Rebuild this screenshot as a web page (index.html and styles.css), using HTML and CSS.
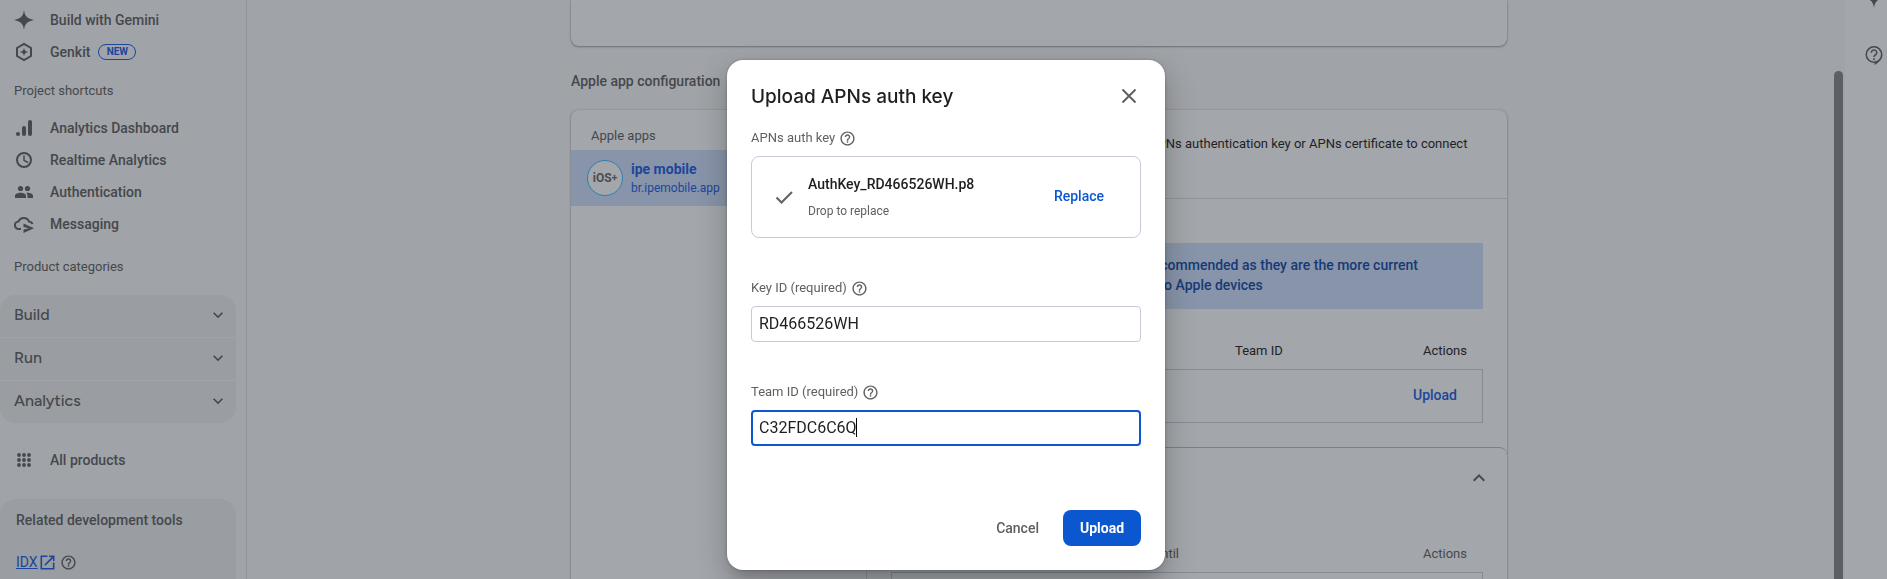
FILE: index.html
```html
<!DOCTYPE html>
<html lang="en">
<head>
<meta charset="utf-8">
<title>Cloud Messaging settings</title>
<link rel="stylesheet" href="styles.css">
</head>
<body>
<svg class="defs" aria-hidden="true">
  <symbol id="help" viewBox="0 0 24 24"><path d="M11 18h2v-2h-2v2zm1-16C6.48 2 2 6.48 2 12s4.48 10 10 10 10-4.48 10-10S17.52 2 12 2zm0 18c-4.41 0-8-3.59-8-8s3.59-8 8-8 8 3.59 8 8-3.59 8-8 8zm0-14c-2.21 0-4 1.79-4 4h2c0-1.1.9-2 2-2s2 .9 2 2c0 2-3 1.75-3 5h2c0-2.25 3-2.5 3-5 0-2.21-1.79-4-4-4z"/></symbol>
  <symbol id="spark" viewBox="0 0 20 20"><path d="M10 0c.7 5 2 8.600 10 10-8 1.400-9.300 5-10 10-.7-5-2-8.600-10-10 8-1.400 9.300-5 10-10z"/></symbol>
  <symbol id="down" viewBox="0 0 24 24"><path d="M7.410 8.590 12 13.170l4.590-4.580L18 10l-6 6-6-6z"/></symbol>
</svg>
<div class="app">
  <nav class="sidebar" aria-label="Project">
    <div class="links">
      <a class="link" href="#gemini"><svg class="i20"><use href="#spark"/></svg>Build with Gemini</a>
      <a class="link" href="#genkit"><svg class="i20" viewBox="0 0 20 20"><path d="M10 1.900 17 6v8l-7 4.100L3 14V6z" fill="none" stroke="currentColor" stroke-width="2"/><path d="M10 5.500c.4 3 1.500 4.100 4.500 4.500-3 .4-4.100 1.500-4.500 4.500-.4-3-1.500-4.100-4.500-4.500 3-.4 4.100-1.500 4.500-4.500z"/></svg>Genkit<span class="badge">NEW</span></a>
    </div>
    <h3 class="group-title">Project shortcuts</h3>
    <div class="links">
      <a class="link" href="#dashboard"><svg class="i20" viewBox="0 0 20 20"><circle cx="4" cy="16" r="2"/><rect x="8" y="8" width="4" height="10" rx="2"/><rect x="14" y="2" width="4" height="16" rx="2"/></svg>Analytics Dashboard</a>
      <a class="link" href="#realtime"><svg class="i20" viewBox="0 0 20 20"><circle cx="10" cy="10" r="7" fill="none" stroke="currentColor" stroke-width="2"/><path d="M10 5.500V10.300l4 2.200" fill="none" stroke="currentColor" stroke-width="1.500"/></svg>Realtime Analytics</a>
      <a class="link" href="#auth"><svg class="i20" viewBox="0 0 20 20"><circle cx="6.500" cy="6.500" r="2.600"/><circle cx="13.500" cy="6.500" r="2.600"/><path d="M1 16v-2.200c0-2 3-3 5.500-3s5.500 1 5.500 3V16zM13.500 16v-2.500c0-1-.5-1.900-1.200-2.600 2.700-.3 6.700.6 6.700 2.900V16z"/></svg>Authentication</a>
      <a class="link" href="#messaging"><svg class="i20" viewBox="0 0 20 20"><path d="M7 15H4.800A3.800 3.800 0 0 1 4.600 7.400 5.600 5.600 0 0 1 15 7.500c1.600.2 2.900 1 3.600 2.500" fill="none" stroke="currentColor" stroke-width="2"/><path d="M9.500 9.500 20 14.200 9.500 19v-3.600l5.500-1.200-5.500-1.200z"/></svg>Messaging</a>
    </div>
    <h3 class="group-title second">Product categories</h3>
    <div class="categories">
      <button class="category" type="button">Build<svg class="i20"><use href="#down"/></svg></button>
      <button class="category" type="button">Run<svg class="i20"><use href="#down"/></svg></button>
      <button class="category" type="button">Analytics<svg class="i20"><use href="#down"/></svg></button>
    </div>
    <a class="link all" href="#all"><svg class="i20" viewBox="0 0 20 20"><g><circle cx="5" cy="5" r="1.900"/><circle cx="10" cy="5" r="1.900"/><circle cx="15" cy="5" r="1.900"/><circle cx="5" cy="10" r="1.900"/><circle cx="10" cy="10" r="1.900"/><circle cx="15" cy="10" r="1.900"/><circle cx="5" cy="15" r="1.900"/><circle cx="10" cy="15" r="1.900"/><circle cx="15" cy="15" r="1.900"/></g></svg>All products</a>
    <section class="related">
      <h3 class="related-title">Related development tools</h3>
      <div class="related-row">
        <a class="idx" href="#idx">IDX</a><svg class="i16 open" viewBox="1 1 22 22"><path d="M19 19H5V5h7V3H3v18h18v-9h-2v7zM14 3v2h3.590l-9.830 9.830 1.410 1.410L19 6.410V10h2V3h-7z"/></svg><svg class="i16"><use href="#help"/></svg>
      </div>
    </section>
  </nav>

  <main class="main">
    <div class="column">
      <section class="card previous"></section>
      <h2 class="section-title">Apple app configuration</h2>
      <section class="card config">
        <div class="apps">
          <div class="apps-title">Apple apps</div>
          <a class="app-row" href="#app">
            <span class="platform">iOS<span class="plus">+</span></span>
            <span class="app-text"><span class="app-name">ipe mobile</span><span class="app-id">br.ipemobile.app</span></span>
          </a>
        </div>
        <div class="details">
          <p class="intro">Firebase Cloud Messaging can use either an APNs authentication key or APNs certificate to connect with APNs</p>
          <div class="panel">
            <div class="notice">Configuration with auth keys is recommended as they are the more current method for sending notifications to Apple devices</div>
            <table class="keys">
              <thead><tr><td></td><th>Team ID</th><th class="end">Actions</th></tr></thead>
              <tbody><tr><td></td><td></td><td class="end"><button class="text-button" type="button">Upload</button></td></tr></tbody>
            </table>
          </div>
          <div class="panel certificates">
            <button class="collapse" type="button" aria-label="Collapse"><svg class="i24 flip"><use href="#down"/></svg></button>
            <table class="keys muted">
              <thead><tr><th class="until">Valid until</th><td></td><th class="end">Actions</th></tr></thead>
              <tbody><tr><td></td><td></td><td></td></tr></tbody>
            </table>
          </div>
        </div>
      </section>
    </div>
  </main>
  <div class="scrollbar"><div class="thumb"></div></div>
  <aside class="rail">
    <button class="rail-button" type="button" aria-label="Gemini"><svg class="i20"><use href="#spark"/></svg></button>
    <button class="rail-button" type="button" aria-label="Support"><svg class="i20" viewBox="0 0 20 20"><path d="M10.500 17.200V20c4.500-2.300 8-6 8-10.500a8.500 8.500 0 1 0-8.500 8.500z M10 2.600a7 7 0 1 1 0 14 7 7 0 0 1 0-14z" fill-rule="evenodd"/><path d="M7.300 7.700a2.700 2.700 0 1 1 4.300 2.100c-1 .8-1.600 1.200-1.600 2.300" fill="none" stroke="currentColor" stroke-width="1.500"/><circle cx="10" cy="14.200" r="1"/></svg></button>
  </aside>
</div>

<div class="overlay">
  <form class="dialog" role="dialog" aria-modal="true" aria-labelledby="dialog-title">
    <header class="dialog-head">
      <h1 class="dialog-title" id="dialog-title">Upload APNs auth key</h1>
      <button class="close" type="button" aria-label="Close"><svg class="i24" viewBox="0 0 24 24"><path d="m5.500 5.500 13 13m0-13-13 13" stroke="currentColor" stroke-width="2"/></svg></button>
    </header>
    <div class="label">APNs auth key<svg class="i16"><use href="#help"/></svg></div>
    <div class="file">
      <svg class="i24" viewBox="0 0 24 24"><path d="m4.500 12.500 5 5 10.500-10.500" fill="none" stroke="currentColor" stroke-width="2"/></svg>
      <div class="file-text"><span class="file-name">AuthKey_RD466526WH.p8</span><span class="file-hint">Drop to replace</span></div>
      <button class="text-button replace" type="button">Replace</button>
    </div>
    <div class="field">
      <label class="label" for="key-id">Key ID (required)<svg class="i16"><use href="#help"/></svg></label>
      <input class="input" id="key-id" type="text" value="RD466526WH">
    </div>
    <div class="field">
      <label class="label" for="team-id">Team ID (required)<svg class="i16"><use href="#help"/></svg></label>
      <div class="input-wrap"><input class="input active" id="team-id" type="text" value="C32FDC6C6Q"><span class="caret"></span></div>
    </div>
    <footer class="actions">
      <button class="button" type="button">Cancel</button>
      <button class="button primary" type="submit">Upload</button>
    </footer>
  </form>
</div>
</body>
</html>
```

FILE: styles.css
```css
* { box-sizing: border-box; }

body {
  margin: 0;
  height: 100vh;
  overflow: hidden;
  background: #a0a3a7;
  color: #45484c;
  font: 14px/20px Roboto, "Liberation Sans", sans-serif;
}

h1, h2, h3, p { margin: 0; font-weight: 400; }
a { color: inherit; text-decoration: none; }
button { margin: 0; padding: 0; border: 0; background: none; color: inherit; font: inherit; cursor: pointer; }
svg { display: block; flex: none; fill: currentColor; }

.defs { position: absolute; width: 0; height: 0; }
.i16 { width: 16px; height: 16px; }
.i20 { width: 20px; height: 20px; }
.i24 { width: 24px; height: 24px; }

.app { display: flex; height: 100vh; }

/* Sidebar */
.sidebar { flex: none; width: 247px; padding-top: 4px; overflow: hidden; border-right: 1px solid #909397; }
.link { display: flex; align-items: center; gap: 16px; height: 32px; padding-left: 14px; font-weight: 500; }
.badge { margin-left: -8px; width: 38px; border: 1px solid #1c469b; border-radius: 8px; color: #1c469b; font-size: 10px; font-weight: 700; line-height: 14px; text-align: center; }
.group-title { margin: 11px 0 9px; padding-left: 14px; font-size: 13px; line-height: 24px; }
.group-title.second { margin: 15px 0 16px; }
.categories { display: grid; gap: 1px; margin-right: 10px; border-radius: 16px; overflow: hidden; }
.category { display: flex; align-items: center; justify-content: space-between; height: 42px; padding: 0 8px 2px 14px; background: #9a9da1; font: 500 16px/24px Figtree, Lato, Roboto, sans-serif; }
.all { margin: 21px 0 23px; }
.related { margin-right: 10px; min-height: 120px; padding: 11px 16px; border-radius: 16px 16px 0 0; background: #9a9da1; }
.related-title { font-size: 14px; font-weight: 500; }
.related-row { display: flex; align-items: center; margin-top: 22px; }
.idx { color: #1c469b; text-decoration: underline; }
.open { margin: 0 4px 0 1px; color: #1c469b; }

/* Content */
.main { flex: 1; min-width: 0; overflow: hidden; }
.column { width: 100%; max-width: 936px; margin: 0 auto; }
.card { background: #a3a6aa; border-radius: 8px; box-shadow: 0 1px 2px rgba(60, 64, 67, .45), 0 0 2px rgba(60, 64, 67, .3); }
.previous { height: 46px; border-radius: 0 0 8px 8px; }
.section-title { margin: 25px 0 19px; font-size: 14px; font-weight: 500; }
.config { display: grid; grid-template-columns: 296px 1fr; min-height: 520px; }
.apps { border-right: 1px solid #909397; }
.apps-title { padding: 16px 20px 4px; font-size: 13px; }
.app-row { display: flex; align-items: center; gap: 8px; height: 56px; padding-left: 16px; background: #8894a9; color: #1c469b; }
.platform { display: flex; align-items: center; justify-content: center; width: 36px; height: 36px; border: 1px solid #2f81ab; border-radius: 50%; background: #a3a6aa; color: #4a4d51; font: 700 12px/16px Roboto, sans-serif; }
.plus { font-size: 10px; }
.app-text { display: flex; flex-direction: column; }
.app-name { font-weight: 700; line-height: 20px; }
.app-id { font-size: 12px; line-height: 18px; }
.intro { height: 88px; padding: 24px 36px 0 24px; color: #1f2226; font-size: 13px; }
.panel { padding: 44px 24px 24px; border-top: 1px solid #909397; }
.notice { padding: 12px 40px 14px 61px; color: #173a76; background: #8894a9; font-weight: 500; }
.keys { width: 100%; margin-top: 24px; border-collapse: collapse; table-layout: fixed; color: #1f2226; font-size: 13px; }
.keys th { height: 36px; padding: 0; font-weight: 400; text-align: left; }
.keys thead td { width: 344px; }
.keys .end { width: 120px; padding-right: 16px; text-align: right; }
.keys tbody tr { height: 54px; outline: 1px solid #858a94; outline-offset: -1px; }
.keys tbody .end { padding: 0 26px 2px 0; }
.text-button { color: #1c469b; font-size: 14px; font-weight: 500; }
.certificates { border-top-color: #797f8b; border-radius: 0 8px 0 0; padding-top: 18px; }
.collapse { display: block; margin: 0 -8px 0 auto; color: #45484c; }
.flip { transform: rotate(180deg); }
.muted { margin-top: 46px; color: #45484c; }
.muted .until { width: 288px; text-align: right; }
.muted thead td { width: auto; }

.scrollbar { flex: none; width: 14px; padding: 71px 2px 0 3px; }
.thumb { height: 100%; border-radius: 5px 5px 0 0; background: #5c5f63; }
.rail { flex: none; width: 42px; background: #a3a6aa; overflow: hidden; }
.rail-button { display: flex; justify-content: center; width: 58px; }
.rail-button:first-child { margin-top: -12px; }
.rail-button + .rail-button { margin-top: 37px; }

/* Dialog */
.overlay { position: fixed; inset: 0; display: flex; align-items: flex-start; justify-content: center; padding: 60px 0 0 5px; }
.dialog { width: 438px; padding: 24px; border-radius: 16px; background: #fff; color: #5f6063; box-shadow: 0 11px 15px -7px rgba(0, 0, 0, .2), 0 12px 30px 3px rgba(0, 0, 0, .2), 0 0 3px rgba(0, 0, 0, .25); }
.dialog-head { display: flex; align-items: center; justify-content: space-between; height: 24px; margin-bottom: 20px; }
.dialog-title { padding-top: 2px; color: #1d1e20; font: 500 19px/24px Inter, Roboto, sans-serif; }
.label { display: flex; align-items: center; gap: 4px; font-size: 13px; line-height: 20px; }
.label .i16, .related .i16 { width: 17px; height: 17px; }
.file { display: flex; align-items: center; height: 82px; margin: 8px 0 40px; padding: 0 36px 0 20px; border: 1px solid #c8cada; border-radius: 8px; }
.file-text { display: flex; flex: 1; flex-direction: column; gap: 7px; margin-left: 12px; }
.file-name { color: #1d1e20; font-weight: 500; }
.file-hint { font-size: 12px; }
.replace { padding-bottom: 2px; color: #0b57d0; }
.field { margin-bottom: 40px; }
.input { display: block; width: 100%; height: 36px; margin-top: 8px; padding: 0 7px 2px; border: 1px solid #c8cada; border-radius: 4px; outline: 0; background: #fff; color: #1d1e20; font: 400 16px/24px Roboto, sans-serif; }
.input.active { padding: 0 6px 2px; border: 2px solid #0b57d0; }
.input-wrap { position: relative; }
.caret { position: absolute; left: 105px; top: 8px; width: 1px; height: 19px; background: #000; }
.actions { display: flex; justify-content: flex-end; gap: 8px; margin-top: 64px; }
.button { height: 36px; padding: 0 16px; border-radius: 8px; font-weight: 500; }
.primary { min-width: 78px; background: #0b57d0; color: #fff; font-weight: 700; }
```
